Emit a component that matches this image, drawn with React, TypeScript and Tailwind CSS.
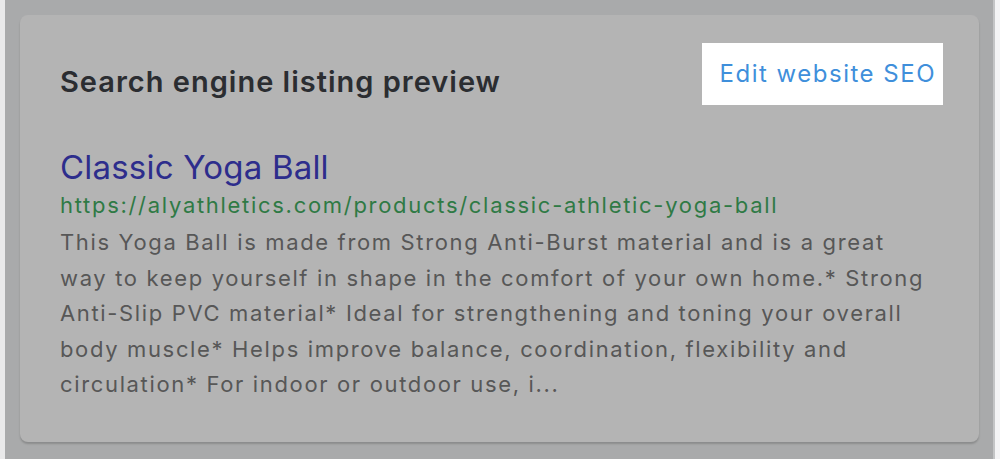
const description =
  "This Yoga Ball is made from Strong Anti-Burst material and is a great way to keep yourself in shape in the comfort of your own home.* Strong Anti-Slip PVC material* Ideal for strengthening and toning your overall body muscle* Helps improve balance, coordination, flexibility and circulation* For indoor or outdoor use, i...";

const App = () => {
  return (
    <div
      className="flex h-[459px] w-[1000px] overflow-hidden bg-[#a9aaab]"
      style={{ fontFamily: "Inter, 'Noto Sans', sans-serif" }}
    >
      <div className="w-[5px] shrink-0 bg-[#e9e9ea]" />

      <div className="flex-1 pl-[15px] pr-[14px] pt-[15px]">
        <div className="h-[427px] rounded-[8px] bg-[#b4b4b4] pl-[40px] pr-[20px] pt-[28px] shadow-[0_2px_2px_rgba(0,0,0,0.18)]">
          <div className="flex items-start justify-between pr-[16px]">
            <h2 className="mt-[21px] text-[29px] leading-[36px] font-semibold tracking-[1px] text-[#2b2d31]">
              Search engine listing preview
            </h2>
            <a
              href="#"
              className="flex h-[62px] items-center bg-white pl-[18px] pr-[7px] text-[24px] tracking-[1.5px] text-[#3f8fdb]"
            >
              Edit website SEO
            </a>
          </div>

          <div className="mt-[42px] flex flex-col">
            <p className="text-[33px] leading-[40px] tracking-[0.2px] text-[#2d2d8c]">
              Classic Yoga Ball
            </p>
            <p className="text-[22px] leading-[36px] tracking-[1.7px] text-[#2f7a45]">
              https://alyathletics.com/products/classic-athletic-yoga-ball
            </p>
            <p className="mt-[2px] w-[872px] text-[22px] leading-[35.5px] tracking-[1.65px] text-[#575757]">
              {description}
            </p>
          </div>
        </div>
      </div>

      <div className="w-[2px] shrink-0 bg-[#c4c5c6]" />
      <div className="w-[5px] shrink-0 bg-[#f4f4f5]" />
    </div>
  );
};

export default App;
